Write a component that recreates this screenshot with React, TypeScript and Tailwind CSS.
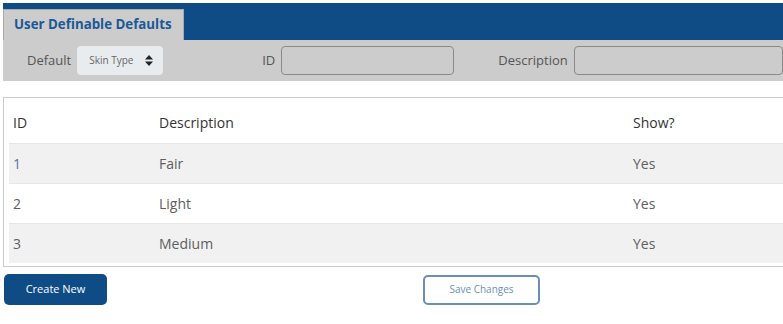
import React from 'react';

const rows = [
  { id: '1', description: 'Fair', show: 'Yes', link: true },
  { id: '2', description: 'Light', show: 'Yes', link: false },
  { id: '3', description: 'Medium', show: 'Yes', link: false },
];

function SortIcon() {
  return (
    <svg width="8" height="11" viewBox="0 0 8 11" className="fill-[#222]">
      <path d="M4 0 L8 4.5 H0 Z" />
      <path d="M4 11 L8 6.5 H0 Z" />
    </svg>
  );
}

export default function App() {
  return (
    <div className="w-[783px] h-[324px] bg-white pl-[3px] pt-[3px] font-['Open_Sans',sans-serif] overflow-hidden">
      <div className="h-[37px] bg-[#0f4c86] flex items-end">
        <div className="w-[181px] h-[31px] bg-[#cccccc] border-l border-t border-r border-[#a9a9a9] flex items-center pl-[10px]">
          <span className="text-[13.3px] font-bold text-[#1b5996]">User Definable Defaults</span>
        </div>
      </div>

      <div className="h-[41px] bg-[#cccccc] flex items-center text-[13px] text-[#555]">
        <span className="ml-[24px]">Default</span>
        <div className="ml-[6px] w-[86px] h-[29px] rounded-[4px] bg-[#e9ecef] flex items-center pl-[12px] pr-[10px] justify-between">
          <span className="text-[10px] text-[#666]">Skin Type</span>
          <SortIcon />
        </div>
        <span className="ml-[99px]">ID</span>
        <div className="ml-[6px] w-[173px] h-[29px] rounded-[4px] border border-[#8a8a8a] bg-[#cccccc]" />
        <span className="ml-[44px]">Description</span>
        <div className="ml-[6px] w-[209px] h-[29px] rounded-[4px] border border-[#8a8a8a] bg-[#cccccc]" />
      </div>

      <div className="mt-[16px] h-[170px] border-l border-t border-b border-[#cccccc] pl-[5px] text-[14px]">
        <div className="h-[45px] flex items-center pt-[4px] text-[#333]">
          <span className="w-[150px] pl-[4px]">ID</span>
          <span className="w-[474px]">Description</span>
          <span>Show?</span>
        </div>
        {rows.map((row, i) => (
          <div
            key={row.id}
            className={
              'h-[40px] flex items-center text-[#5e5e5e] border-t border-[#e6e6e6] ' +
              (i % 2 === 0 ? 'bg-[#f1f1f1]' : 'bg-white')
            }
          >
            <span className={'w-[150px] pl-[4px] ' + (row.link ? 'text-[#5573a8]' : '')}>{row.id}</span>
            <span className="w-[474px]">{row.description}</span>
            <span>{row.show}</span>
          </div>
        ))}
      </div>

      <div className="mt-[7px] flex items-center">
        <button className="ml-[1px] w-[103px] h-[31px] rounded-[5px] bg-[#0f4c86] text-white text-[11px]">
          Create New
        </button>
        <button className="ml-[316px] w-[117px] h-[30px] rounded-[5px] border-2 border-[#6a8fb7] bg-white text-[#6a8fb7] text-[10px]">
          Save Changes
        </button>
      </div>
    </div>
  );
}
